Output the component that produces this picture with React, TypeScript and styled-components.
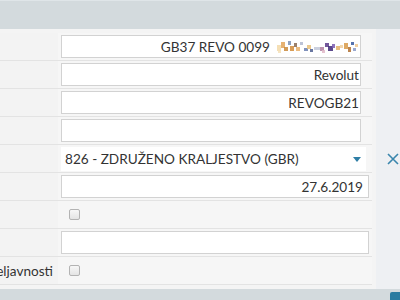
import React from "react";
import styled, { createGlobalStyle } from "styled-components";

const Global = createGlobalStyle`
  html, body { margin: 0; padding: 0; width: 400px; height: 300px; overflow: hidden; }
  body { font-family: Lato, "Open Sans", sans-serif; font-size: 13.6px; color: #333; background: #eef0f3; }
`;

const Page = styled.div`
  display: grid;
  grid-template-rows: 29px 260px 11px;
  width: 400px;
  height: 300px;
`;

const TopBar = styled.div`
  background: #d3dadd;
  border-top: 1px solid #dfe5e8;
`;

const Middle = styled.div`
  display: flex;
  background: #eef0f3;
`;

const Panel = styled.div`
  width: 376px;
  flex-shrink: 0;
  background: #f4f4f4;
  padding: 4px 4px 0 0;
  box-sizing: border-box;
`;

const Row = styled.div`
  display: grid;
  grid-template-columns: 58px 314px;
  height: 28px;
  box-sizing: border-box;
  border-bottom: 1px solid #e3e3e3;
`;

const Label = styled.div`
  display: flex;
  justify-content: flex-end;
  align-items: center;
  white-space: nowrap;
  padding-right: 5px;
  overflow: visible;
  background: #f3f3f3;
  color: #333;
`;

const Value = styled.div`
  display: flex;
  align-items: center;
  padding-left: 3px;
  background: #f6f6f6;
  min-width: 0;
`;

const Field = styled.div<{ $w: number; $pr?: number }>`
  width: ${(p) => p.$w}px;
  height: 23px;
  box-sizing: border-box;
  border: 1px solid #d2d2d2;
  background: #fff;
  display: flex;
  align-items: center;
  justify-content: flex-end;
  padding-right: ${(p) => p.$pr ?? 1}px;
  white-space: nowrap;
  color: #333;
  gap: 7px;
`;

const Select = styled.div`
  width: 305px;
  height: 24px;
  box-sizing: border-box;
  background: #fff;
  display: flex;
  align-items: center;
  justify-content: space-between;
  padding: 0 5px 0 4px;
  white-space: nowrap;
  flex-shrink: 0;
`;

const Caret = styled.span`
  width: 0;
  height: 0;
  border-left: 4px solid transparent;
  border-right: 4px solid transparent;
  border-top: 5px solid #2e7ea6;
  margin-top: 2px;
`;

const Clear = styled.span`
  margin-left: 21px;
  flex-shrink: 0;
  display: flex;
`;

const Check = styled.span`
  width: 11px;
  height: 11px;
  box-sizing: border-box;
  border: 1px solid #b3b3b3;
  border-radius: 2px;
  background: linear-gradient(#f7f7f7, #e4e4e4);
  margin-left: 8px;
`;

const BottomBar = styled.div`
  background: #d3dadd;
  display: flex;
  justify-content: flex-end;
  align-items: flex-end;
`;

const Corner = styled.div`
  width: 10px;
  height: 8px;
  background: #2a7ba0;
  border-top-left-radius: 2px;
`;

const blobs: [number, number, number, number, string][] = [
  [0, 5, 4, 6, "#f3d9a8"], [4, 2, 4, 6, "#e2a45a"], [7, 7, 4, 4, "#c98a3c"],
  [11, 1, 3, 4, "#7a8fb5"], [13, 6, 4, 5, "#d28c3a"], [17, 3, 3, 4, "#8a6a50"],
  [19, 7, 4, 4, "#e9b06a"], [23, 2, 3, 3, "#b0b8d0"], [27, 8, 4, 3, "#6a7fb0"],
  [30, 5, 4, 4, "#e8c07a"], [33, 9, 3, 3, "#4f5f90"], [37, 7, 6, 3, "#c2c8d8"],
  [43, 7, 4, 4, "#b07fa0"], [48, 3, 4, 4, "#5a3a8a"], [51, 6, 5, 5, "#402a78"],
  [55, 4, 3, 4, "#7a5ab0"], [59, 6, 4, 4, "#e3b26a"], [63, 5, 3, 3, "#f0d0a0"],
  [67, 3, 4, 6, "#d89a48"], [71, 7, 3, 5, "#b07030"], [74, 2, 3, 3, "#3a5aa0"],
  [76, 8, 3, 3, "#8a9ac8"], [1, 10, 3, 3, "#f5e0b8"], [45, 10, 3, 3, "#e0b8c8"],
  [78, 4, 3, 3, "#f0c890"],
];

const Obscured = () => (
  <svg width="82" height="14" viewBox="0 0 82 14" style={{ display: "block" }}>
    {blobs.map(([x, y, w, h, c], i) => (
      <rect key={i} x={x} y={y} width={w} height={h} fill={c} opacity={0.85} />
    ))}
  </svg>
);

export default function App() {
  return (
    <>
      <Global />
      <Page>
        <TopBar />
        <Middle>
          <Panel>
            <Row>
              <Label />
              <Value>
                <Field $w={300} $pr={1}>
                  <span>GB37 REVO 0099</span>
                  <Obscured />
                </Field>
              </Value>
            </Row>
            <Row>
              <Label />
              <Value>
                <Field $w={300}>Revolut</Field>
              </Value>
            </Row>
            <Row>
              <Label />
              <Value>
                <Field $w={300}>REVOGB21</Field>
              </Value>
            </Row>
            <Row>
              <Label />
              <Value>
                <Field $w={300} />
              </Value>
            </Row>
            <Row>
              <Label />
              <Value>
                <Select>
                  <span>826 - ZDRUŽENO KRALJESTVO (GBR)</span>
                  <Caret />
                </Select>
                <Clear>
                  <svg width="12" height="12" viewBox="0 0 12 12">
                    <path d="M1 1 L11 11 M11 1 L1 11" stroke="#3a86ad" strokeWidth="1.6" fill="none" />
                  </svg>
                </Clear>
              </Value>
            </Row>
            <Row>
              <Label />
              <Value>
                <Field $w={308} $pr={5}>27.6.2019</Field>
              </Value>
            </Row>
            <Row>
              <Label />
              <Value>
                <Check />
              </Value>
            </Row>
            <Row>
              <Label />
              <Value>
                <Field $w={308} />
              </Value>
            </Row>
            <Row>
              <Label>Datum veljavnosti</Label>
              <Value>
                <Check />
              </Value>
            </Row>
          </Panel>
        </Middle>
        <BottomBar>
          <Corner />
        </BottomBar>
      </Page>
    </>
  );
}
